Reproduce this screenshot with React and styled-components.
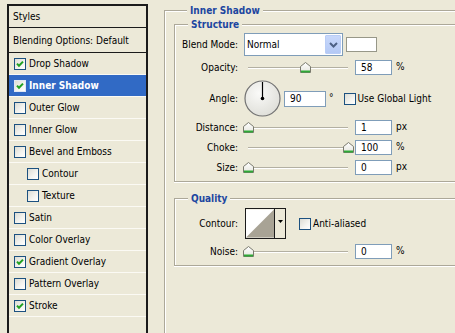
import React from 'react';
import styled, { createGlobalStyle } from 'styled-components';

const FONT = `"DejaVu Sans Condensed", "DejaVu Sans", sans-serif`;

const Global = createGlobalStyle`
  html, body { margin: 0; padding: 0; background: #ece9d8; overflow: hidden; }
  * { box-sizing: border-box; }
`;

const Window = styled.div`
  display: flex;
  align-items: flex-start;
  width: 455px;
  height: 333px;
  overflow: hidden;
  padding: 4px 0 0 7px;
  background: #ece9d8;
  font-family: ${FONT};
  font-stretch: condensed;
  font-size: 10px;
  color: #000;
`;

/* ---------- left list ---------- */
const StylesPanel = styled.div`
  flex: none;
  width: 141px;
  height: 345px;
  border: 2px solid #1b1b1b;
  border-bottom: none;
  display: flex;
  flex-direction: column;
`;

const HeadRow = styled.div`
  height: ${p => p.$h}px;
  display: flex;
  align-items: center;
  padding-left: 4px;
  border-bottom: 1px solid #1b1b1b;
`;

const ListRow = styled.div`
  height: 22px;
  display: flex;
  align-items: center;
  gap: 3px;
  padding-left: ${p => (p.$indent ? 18 : 5)}px;
  border-bottom: 1px solid #fbfaf4;
  background: ${p => (p.$selected ? '#316ac5' : 'transparent')};
  color: ${p => (p.$selected ? '#fff' : '#000')};
  font-weight: ${p => (p.$selected ? 'bold' : 'normal')};
`;

const Box = styled.span`
  flex: none;
  width: 12px;
  height: 12px;
  border: 1px solid ${p => (p.$light ? '#dfe6f4' : '#1c5180')};
  background: linear-gradient(135deg, #dcdcd4 0%, #f4f4f0 60%, #ffffff 100%);
  display: inline-flex;
  align-items: center;
  justify-content: center;
`;

const Check = ({ checked, light }) => (
  <Box $light={light}>
    {checked && (
      <svg width="8" height="8" viewBox="0 0 8 8">
        <path d="M1 3.6 L3 5.8 L7 1.6" fill="none" stroke="#21a121" strokeWidth="2" />
      </svg>
    )}
  </Box>
);

const styleItems = [
  { label: 'Drop Shadow', checked: true },
  { label: 'Inner Shadow', checked: true, selected: true },
  { label: 'Outer Glow' },
  { label: 'Inner Glow' },
  { label: 'Bevel and Emboss' },
  { label: 'Contour', indent: true },
  { label: 'Texture', indent: true },
  { label: 'Satin' },
  { label: 'Color Overlay' },
  { label: 'Gradient Overlay', checked: true },
  { label: 'Pattern Overlay' },
  { label: 'Stroke', checked: true },
];

/* ---------- right settings ---------- */
const Settings = styled.div`
  flex: none;
  width: 330px;
  margin-left: 16px;
  display: flex;
  flex-direction: column;
`;

const Group = styled.div`
  display: flex;
  flex-direction: column;
  margin-top: ${p => p.$mt || 0}px;
  border: 1px solid #aca899;
  border-right: none;
  box-shadow: inset 1px 1px 0 #fff, 0 1px 0 #fff;
  padding: 0 0 ${p => p.$pb || 0}px ${p => p.$pl || 0}px;
  min-height: ${p => p.$minh || 0}px;
`;

const Title = styled.span`
  align-self: flex-start;
  margin: -7px 0 0 13px;
  padding: 0 3px;
  height: 13px;
  line-height: 13px;
  background: #ece9d8;
  color: #1c46a0;
  font-weight: bold;
`;

const Row = styled.div`
  display: flex;
  align-items: center;
  height: ${p => p.$h}px;
  margin-top: ${p => p.$mt}px;
`;

const Label = styled.span`
  flex: none;
  width: 63px;
  margin-right: 6px;
  text-align: right;
  white-space: nowrap;
`;

const Select = styled.div`
  flex: none;
  width: 99px;
  height: 23px;
  border: 1px solid #7f9db9;
  background: #fff;
  display: flex;
  align-items: center;
  justify-content: space-between;
  padding: 2px 1px 2px 2px;
`;

const SelectButton = styled.span`
  width: 16px;
  height: 19px;
  border: 1px solid #b9cdf6;
  border-radius: 1px;
  background: linear-gradient(180deg, #c8d8fb 0%, #b4c9f5 100%);
  display: flex;
  align-items: center;
  justify-content: center;
`;

const Swatch = styled.span`
  flex: none;
  width: 31px;
  height: 15px;
  margin-left: 3px;
  border: 1px solid #979788;
  background: #fff;
`;

const SliderWrap = styled.div`
  position: relative;
  flex: none;
  width: 108px;
  height: 15px;
  display: flex;
  align-items: center;
  padding: 0 4px;
`;

const Track = styled.div`
  width: 100%;
  height: 2px;
  border-top: 1px solid #b3b0a2;
  border-bottom: 1px solid #fff;
`;

const Thumb = styled.svg`
  position: absolute;
  top: 2px;
`;

const Slider = ({ value }) => (
  <SliderWrap>
    <Track />
    <Thumb width="11" height="11" viewBox="0 0 11 11" style={{ left: `${4 + value - 5}px` }}>
      <defs>
        <linearGradient id="tg" x1="0" y1="0" x2="0" y2="1">
          <stop offset="0" stopColor="#ffffff" />
          <stop offset="1" stopColor="#e6e6de" />
        </linearGradient>
      </defs>
      <path d="M0.5 4.5 L5.5 0.5 L10.5 4.5 L10.5 10.5 L0.5 10.5 Z" fill="url(#tg)" stroke="#7a7a6e" />
      <path d="M1 9.5 L10 9.5" stroke="#2fa836" strokeWidth="2" />
    </Thumb>
  </SliderWrap>
);

const Field = styled.div`
  flex: none;
  width: ${p => p.$w || 37}px;
  height: ${p => p.$h || 15}px;
  margin-left: ${p => p.$ml || 0}px;
  border: 1px solid #7f9db9;
  background: #fff;
  padding-left: 5px;
  display: flex;
  align-items: center;
`;

const Unit = styled.span`
  margin-left: ${p => p.$ml || 4}px;
  margin-top: -2px;
`;

const CheckLabel = styled.span`
  display: flex;
  align-items: center;
  gap: 2px;
  margin-left: ${p => p.$ml}px;
`;

const Dial = styled.svg`
  flex: none;
`;

const ContourBox = styled.div`
  flex: none;
  width: 41px;
  height: 31px;
  margin-left: 1px;
  border: 1px solid #1b1b1b;
  display: flex;
`;

const ContourPic = styled.svg`
  flex: none;
  border-right: 1px solid #1b1b1b;
`;

const ContourDrop = styled.span`
  flex: 1;
  display: flex;
  justify-content: center;
  padding-top: 11px;
`;

const SliderRow = ({ label, value, pos, unit, mt }) => (
  <Row $h={15} $mt={mt}>
    <Label>{label}</Label>
    <Slider value={pos} />
    <Field $ml={3}>{value}</Field>
    <Unit>{unit}</Unit>
  </Row>
);

export default function App() {
  return (
    <>
      <Global />
      <Window>
        <StylesPanel>
          <HeadRow $h={22}>Styles</HeadRow>
          <HeadRow $h={25}>Blending Options: Default</HeadRow>
          {styleItems.map(it => (
            <ListRow key={it.label} $indent={it.indent} $selected={it.selected}>
              <Check checked={it.checked} light={it.selected} />
              <span>{it.label}</span>
            </ListRow>
          ))}
        </StylesPanel>

        <Settings>
          <Group $mt={6} $pl={9} $minh={360}>
            <Title>Inner Shadow</Title>

            <Group $mt={7} $pb={6}>
              <Title>Structure</Title>
              <Row $h={23} $mt={2}>
                <Label>Blend Mode:</Label>
                <Select>
                  <span>Normal</span>
                  <SelectButton>
                    <svg width="9" height="6" viewBox="0 0 9 6">
                      <path d="M1 1 L4.5 4.5 L8 1" fill="none" stroke="#4d6185" strokeWidth="2" />
                    </svg>
                  </SelectButton>
                </Select>
                <Swatch />
              </Row>
              <SliderRow label="Opacity:" value="58" pos={57} unit="%" mt={4} />
              <Row $h={37} $mt={5}>
                <Label>Angle:</Label>
                <Dial width="37" height="37" viewBox="0 0 37 37">
                  <defs>
                    <radialGradient id="dg" cx="0.4" cy="0.35" r="0.7">
                      <stop offset="0" stopColor="#fafaf8" />
                      <stop offset="1" stopColor="#deded8" />
                    </radialGradient>
                  </defs>
                  <circle cx="18.5" cy="18.5" r="17.5" fill="url(#dg)" stroke="#727272" strokeWidth="1.2" />
                  <line x1="18.5" y1="18.5" x2="18.5" y2="2" stroke="#000" strokeWidth="1.2" />
                  <circle cx="18.5" cy="18.5" r="1.8" fill="#000" />
                </Dial>
                <Field $w={42} $h={16} $ml={3}>90</Field>
                <Unit $ml={3}>°</Unit>
                <CheckLabel $ml={10}>
                  <Check />
                  <span>Use Global Light</span>
                </CheckLabel>
              </Row>
              <SliderRow label="Distance:" value="1" pos={0} unit="px" mt={3} />
              <SliderRow label="Choke:" value="100" pos={100} unit="%" mt={5} />
              <SliderRow label="Size:" value="0" pos={0} unit="px" mt={5} />
            </Group>

            <Group $mt={16} $pb={6}>
              <Title>Quality</Title>
              <Row $h={31} $mt={3}>
                <Label>Contour:</Label>
                <ContourBox>
                  <ContourPic width="29" height="29" viewBox="0 0 29 29">
                    <rect width="29" height="29" fill="#fff" />
                    <polygon points="0,29 29,0 29,29" fill="#a8a395" />
                  </ContourPic>
                  <ContourDrop>
                    <svg width="5" height="3" viewBox="0 0 5 3">
                      <polygon points="0,0 5,0 2.5,3" fill="#000" />
                    </svg>
                  </ContourDrop>
                </ContourBox>
                <CheckLabel $ml={13}>
                  <Check />
                  <span>Anti-aliased</span>
                </CheckLabel>
              </Row>
              <SliderRow label="Noise:" value="0" pos={0} unit="%" mt={5} />
            </Group>
          </Group>
        </Settings>
      </Window>
    </>
  );
}
